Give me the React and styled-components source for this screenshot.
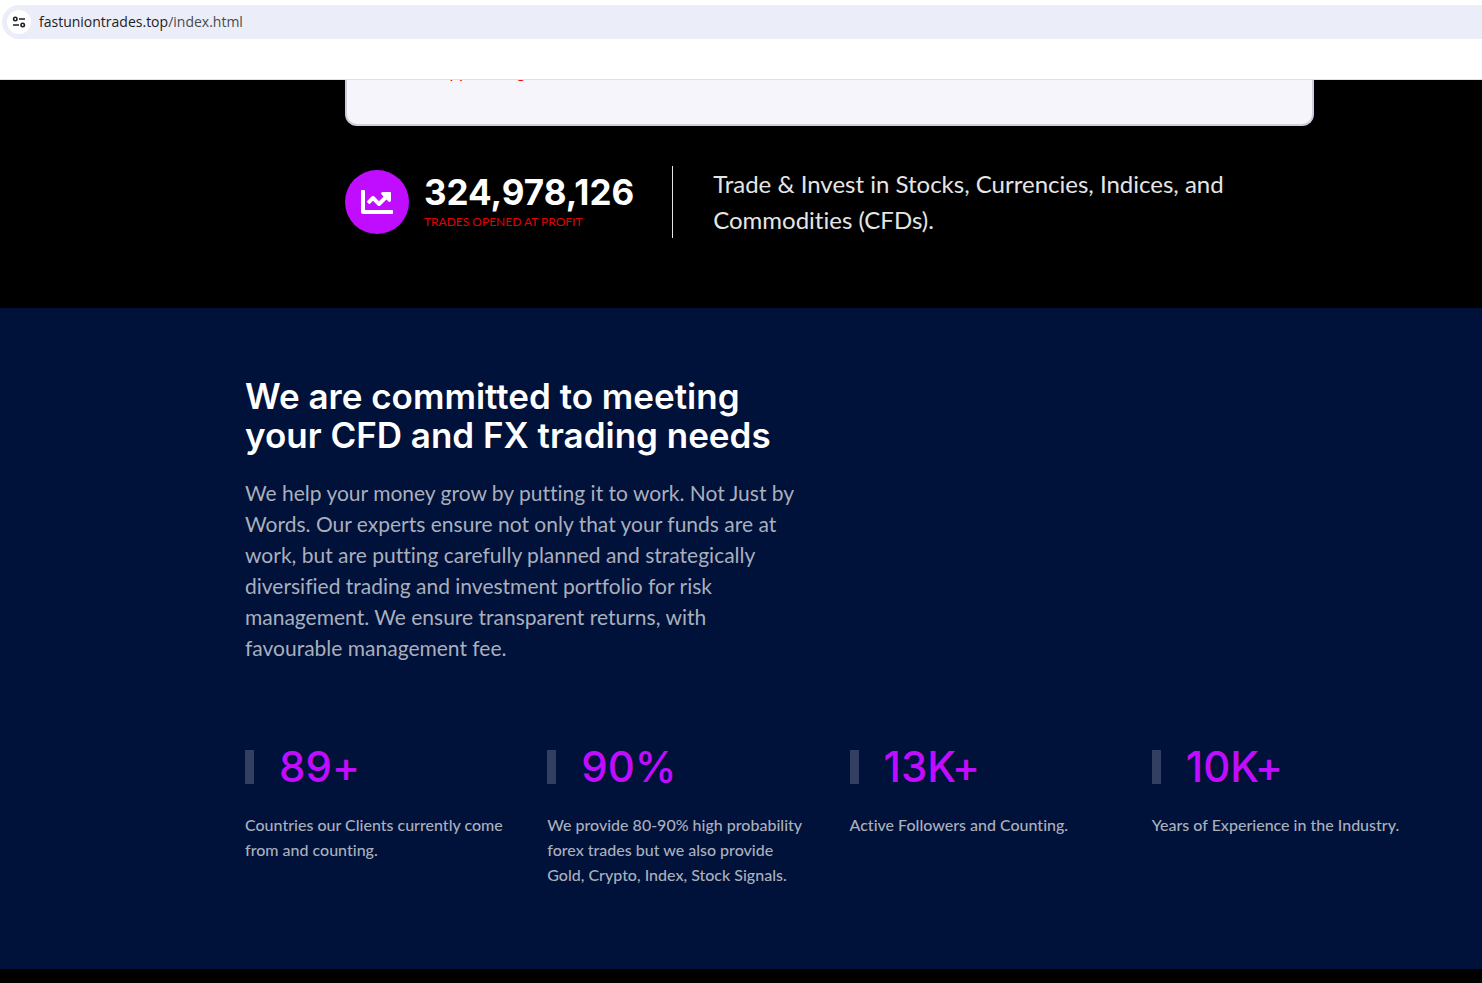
import React from 'react'
import styled, { createGlobalStyle } from 'styled-components'
import { FaChartLine } from 'react-icons/fa'

const GlobalStyle = createGlobalStyle`
  * {
    box-sizing: border-box;
  }
  body {
    margin: 0;
    background: #000;
    font-family: Lato, "Liberation Sans", sans-serif;
    font-variant-ligatures: none;
  }
  h2, p {
    margin: 0;
  }
`;

const BrowserBar = styled.header`
  height: 80px;
  padding: 5px 0 0 2px;
  background: #fff;
  border-bottom: 1px solid #dfe1e1;
`;

const AddressBox = styled.div`
  display: flex;
  align-items: center;
  gap: 8px;
  height: 34px;
  padding-left: 5px;
  background: #ebeef8;
  border-radius: 17px 0 0 17px;
`;

const SiteButton = styled.button`
  display: flex;
  align-items: center;
  justify-content: center;
  width: 24px;
  height: 24px;
  padding: 0;
  border: 0;
  border-radius: 50%;
  background: #fff;
  color: #1f1f1f;
`;

const Address = styled.a`
  font-family: "Open Sans", "Noto Sans", sans-serif;
  font-size: 14px;
  line-height: 20px;
  color: #1f2023;
  text-decoration: none;
`;

const AddressPath = styled.span`
  color: #474a50;
`;

const Hero = styled.section`
  padding: 0 168px 70px 345px;
  background: #000;
`;

const HeroCard = styled.div`
  max-width: 969px;
  height: 46px;
  overflow: hidden;
  background: #f6f5fc;
  border: 2px solid #d3cce0;
  border-top: 0;
  border-radius: 0 0 12px 12px;
`;

const CardNote = styled.p`
  margin-top: -20px;
  padding-left: 94px;
  font-size: 17px;
  line-height: 24px;
  color: #f00;
`;

const HeroRow = styled.div`
  display: flex;
  max-width: 969px;
  margin-top: 40px;
`;

const Counter = styled.div`
  display: flex;
  align-items: center;
  flex-shrink: 0;
  gap: 15px;
  padding-right: 38px;
  border-right: 1px solid #e5e5e5;
`;

const CounterIcon = styled.div`
  display: flex;
  align-items: center;
  justify-content: center;
  width: 64px;
  height: 64px;
  border-radius: 50%;
  background: #c00cff;
  color: #fff;
`;

const CounterValue = styled.p`
  font-family: Inter, "Liberation Sans", sans-serif;
  font-size: 35px;
  font-weight: 700;
  line-height: 40px;
  color: #fff;
`;

const CounterLabel = styled.p`
  font-size: 12px;
  font-weight: 400;
  line-height: 20px;
  color: #e60000;
`;

const Tagline = styled.p`
  padding-left: 40px;
  font-size: 24px;
  font-weight: 400;
  line-height: 36px;
  color: #e5e5e5;
`;

const About = styled.section`
  padding: 69px 68px 82px 245px;
  background: #00113a;
`;

const Heading = styled.h2`
  max-width: 555px;
  font-family: Inter, "Liberation Sans", sans-serif;
  font-size: 35px;
  font-weight: 600;
  line-height: 39px;
  color: #fff;
`;

const Lead = styled.p`
  max-width: 555px;
  margin-top: 22px;
  font-size: 21px;
  font-weight: 400;
  line-height: 31px;
  color: #aaafbc;
`;

const Stats = styled.div`
  display: grid;
  grid-template-columns: repeat(4, minmax(0, 1fr));
  gap: 40px;
  max-width: 1170px;
  margin-top: 83px;
`;

const StatValue = styled.p`
  display: flex;
  align-items: center;
  gap: 25px;
  font-family: Inter, "Liberation Sans", sans-serif;
  font-size: 42px;
  font-weight: 500;
  line-height: 42px;
  color: #c00cff;

  &::before {
    content: "";
    width: 9px;
    height: 34px;
    background: #333f61;
  }
`;

const StatText = styled.p`
  margin-top: 24px;
  font-size: 16px;
  font-weight: 500;
  line-height: 25px;
  color: #aaafbc;
`;

const stats = [
  { value: '89+', text: 'Countries our Clients currently come from and counting.' },
  { value: '90%', text: 'We provide 80-90% high probability forex trades but we also provide Gold, Crypto, Index, Stock Signals.' },
  { value: '13K+', text: 'Active Followers and Counting.' },
  { value: '10K+', text: 'Years of Experience in the Industry.' },
]

function TuneIcon() {
  return (
    <svg width="14" height="14" viewBox="0 0 14 14" fill="none" stroke="currentColor" strokeWidth="1.6">
      <circle cx="3.3" cy="4" r="1.7" />
      <path d="M7 4h6M1 10h6" />
      <circle cx="10.7" cy="10" r="1.7" />
    </svg>
  )
}

function Stat({ value, text }) {
  return (
    <div>
      <StatValue>{value}</StatValue>
      <StatText>{text}</StatText>
    </div>
  )
}

export default function App() {
  return (
    <>
      <GlobalStyle />
      <BrowserBar>
        <AddressBox>
          <SiteButton aria-label="Site information"><TuneIcon /></SiteButton>
          <Address href="#">fastuniontrades.top<AddressPath>/index.html</AddressPath></Address>
        </AddressBox>
      </BrowserBar>

      <main>
        <Hero>
          <HeroCard>
            <CardNote>app trading</CardNote>
          </HeroCard>
          <HeroRow>
            <Counter>
              <CounterIcon><FaChartLine size={32} /></CounterIcon>
              <div>
                <CounterValue>324,978,126</CounterValue>
                <CounterLabel>TRADES OPENED AT PROFIT</CounterLabel>
              </div>
            </Counter>
            <Tagline>Trade &amp; Invest in Stocks, Currencies, Indices, and Commodities (CFDs).</Tagline>
          </HeroRow>
        </Hero>

        <About>
          <Heading>We are committed to meeting your CFD and FX trading needs</Heading>
          <Lead>
            We help your money grow by putting it to work. Not Just by Words. Our experts
            ensure not only that your funds are at work, but are putting carefully planned
            and strategically diversified trading and investment portfolio for risk
            management. We ensure transparent returns, with favourable management fee.
          </Lead>
          <Stats>
            {stats.map((stat) => <Stat key={stat.value} {...stat} />)}
          </Stats>
        </About>
      </main>
    </>
  )
}
